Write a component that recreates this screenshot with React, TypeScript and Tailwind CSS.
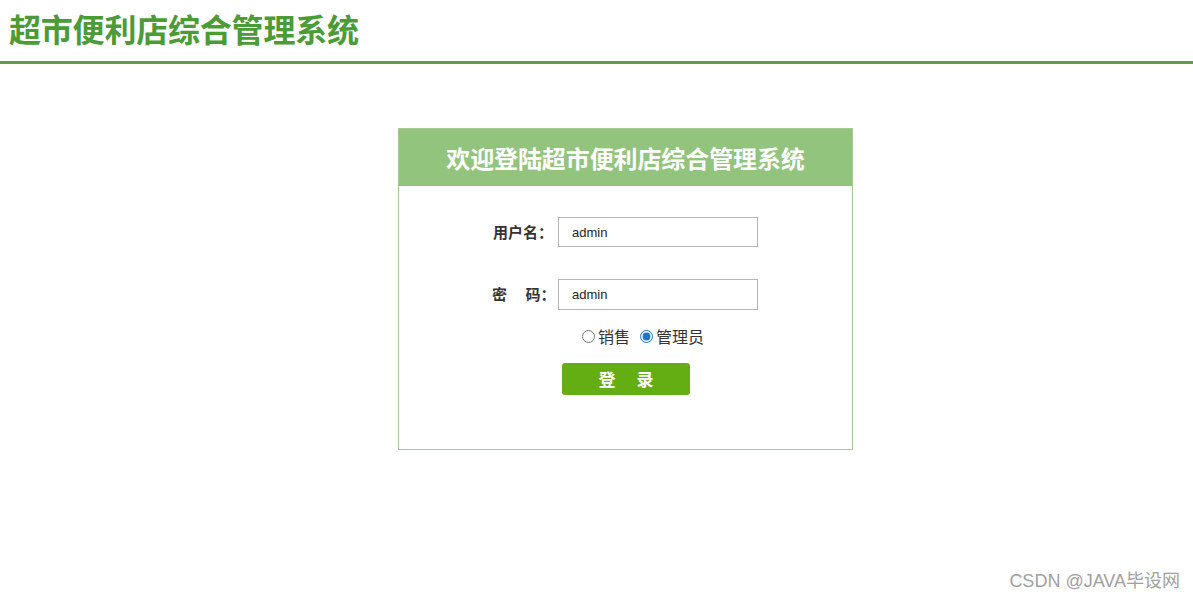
import React, { useState } from 'react';

const App: React.FC = () => {
  const [role, setRole] = useState('admin');
  const [username, setUsername] = useState('admin');
  const [password, setPassword] = useState('admin');

  return (
    <div
      className="relative w-[1193px] h-[600px] bg-white overflow-hidden"
      style={{ fontFamily: '"Microsoft YaHei", "Noto Sans CJK SC", sans-serif' }}
    >
      {/* Top header */}
      <div className="h-[61px] pl-[9px] pt-[6px]">
        <h1 className="text-[32px] leading-[44px] font-bold text-[#4b9b37] tracking-[-0.2px]">
          超市便利店综合管理系统
        </h1>
      </div>
      <div className="h-[3px] bg-[#5fa046]" />

      {/* Login box */}
      <div className="ml-[398px] mt-[64px] w-[455px] h-[322px] border border-[#a8c896] bg-white">
        <div className="h-[57px] bg-[#93c47d] flex items-center justify-center">
          <h2 className="text-[24px] font-bold text-white tracking-[-0.1px]">欢迎登陆超市便利店综合管理系统</h2>
        </div>

        <form className="flex flex-col" onSubmit={(e) => e.preventDefault()}>
          <div className="flex items-center mt-[31px] ml-[94px]">
            <label className="w-[65px] text-[15px] font-bold text-[#333]">用户名：</label>
            <input
              type="text"
              value={username}
              onChange={(e) => setUsername(e.target.value)}
              className="w-[200px] h-[30px] border border-[#b5b5b5] px-[13px] text-[13px] text-[#222] outline-none"
              style={{ fontFamily: '"Liberation Sans", Arial, sans-serif' }}
            />
          </div>

          <div className="flex items-center mt-[32px] ml-[93px]">
            <label className="w-[66px] text-[15px] font-bold text-[#333] whitespace-pre">密　 码：</label>
            <input
              type="text"
              value={password}
              onChange={(e) => setPassword(e.target.value)}
              className="w-[200px] h-[31px] border border-[#b5b5b5] px-[13px] text-[13px] text-[#222] outline-none"
              style={{ fontFamily: '"Liberation Sans", Arial, sans-serif' }}
            />
          </div>

          <div className="flex items-center mt-[15px] ml-[183px] text-[16px] text-[#333] leading-[22px]">
            <label className="flex items-center">
              <input
                type="radio"
                name="role"
                checked={role === 'sale'}
                onChange={() => setRole('sale')}
                className="w-[13px] h-[13px] m-0 mr-[3px] accent-[#1e74c6]"
              />
              销售
            </label>
            <label className="flex items-center ml-[10px]">
              <input
                type="radio"
                name="role"
                checked={role === 'admin'}
                onChange={() => setRole('admin')}
                className="w-[13px] h-[13px] m-0 mr-[3px] accent-[#1e74c6]"
              />
              管理员
            </label>
          </div>

          <div className="mt-[16px] ml-[163px]">
            <button
              type="submit"
              className="w-[128px] h-[32px] rounded-[3px] bg-[#64ad12] text-white text-[17px] font-bold whitespace-pre"
            >
              登　 录
            </button>
          </div>
        </form>
      </div>

      {/* Watermark */}
      <div
        className="absolute right-[13px] top-[569px] text-[18px] leading-[24px] text-[#a0a0a0]"
        style={{ fontFamily: '"Liberation Sans", Arial, "Noto Sans CJK SC", sans-serif' }}
      >
        CSDN @JAVA毕设网
      </div>
    </div>
  );
};

export default App;
